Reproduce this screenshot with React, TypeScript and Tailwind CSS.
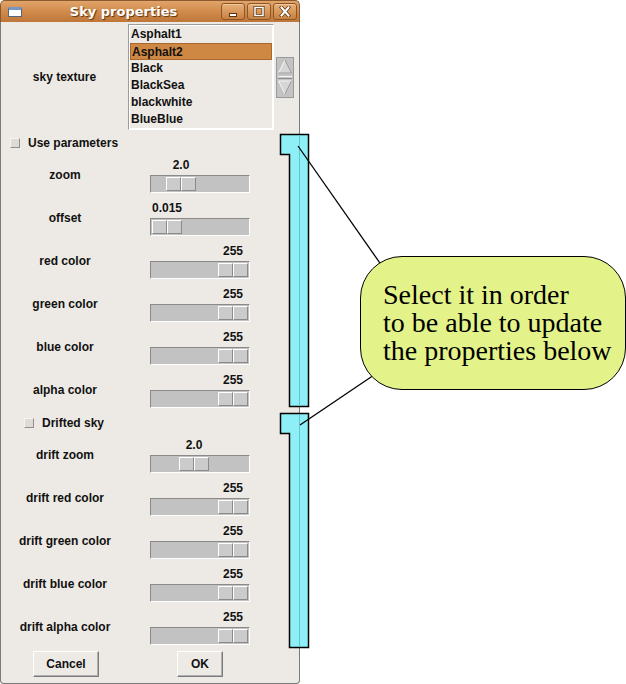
import React from 'react';

type Scale = { label: string; value: string; pos: string };

const mainScales: Scale[] = [
  { label: 'zoom', value: '2.0', pos: 'ml-[14px]' },
  { label: 'offset', value: '0.015', pos: 'ml-[0px]' },
  { label: 'red color', value: '255', pos: 'ml-[66px]' },
  { label: 'green color', value: '255', pos: 'ml-[66px]' },
  { label: 'blue color', value: '255', pos: 'ml-[66px]' },
  { label: 'alpha color', value: '255', pos: 'ml-[66px]' },
];

const driftScales: Scale[] = [
  { label: 'drift zoom', value: '2.0', pos: 'ml-[27px]' },
  { label: 'drift red color', value: '255', pos: 'ml-[66px]' },
  { label: 'drift green color', value: '255', pos: 'ml-[66px]' },
  { label: 'drift blue color', value: '255', pos: 'ml-[66px]' },
  { label: 'drift alpha color', value: '255', pos: 'ml-[66px]' },
];

const textures = ['Asphalt1', 'Asphalt2', 'Black', 'BlackSea', 'blackwhite', 'BlueBlue'];

const raised = 'border border-t-white border-l-white border-r-[#8a8a8a] border-b-[#8a8a8a]';

const ScaleRow: React.FC<Scale> = ({ label, value, pos }) => (
  <div className="flex h-[43px] items-center">
    <div className="w-[128px] pb-[1px] text-center">{label}</div>
    <div className="ml-[21px] flex w-[100px] flex-col self-stretch pt-[3px]">
      <div className="flex h-[16px] pl-[2px] leading-[16px]">
        <div className={`${pos} w-[30px] shrink-0 whitespace-nowrap text-center`}>{value}</div>
      </div>
      <div className="mt-[2px] flex h-[18px] w-[100px] border border-t-[#8a8a8a] border-l-[#8a8a8a] border-r-white border-b-white bg-[#c2c2c2] p-[1px]">
        <div className={`${pos} flex h-full w-[30px] shrink-0`}>
          <div className={`flex-1 ${raised} bg-[#cbcbcb]`} />
          <div className={`flex-1 ${raised} bg-[#cbcbcb]`} />
        </div>
      </div>
    </div>
  </div>
);

const CheckRow: React.FC<{ label: string; indent: string }> = ({ label, indent }) => (
  <div className="flex h-[22px] items-center">
    <div className={`${indent} h-[10px] w-[10px] border border-t-[#f4f4f4] border-l-[#f4f4f4] border-r-[#8f8f8f] border-b-[#8f8f8f] bg-[#dedbd6]`} />
    <div className="ml-[8px]">{label}</div>
  </div>
);

const TitleButton: React.FC<{ children: React.ReactNode }> = ({ children }) => (
  <div className="flex h-[17px] w-[24px] items-center justify-center rounded-[3px] border border-[#8c5526] bg-linear-to-b from-[#e8b07a] to-[#c8813f] shadow-[inset_0_1px_0_#f2c797]">
    {children}
  </div>
);

export default function App() {
  return (
    <div className="relative h-[684px] w-[626px] overflow-hidden bg-white font-['Liberation_Sans',Arial,sans-serif] text-[12px] font-bold text-[#111]">
      <div className="flex h-[684px] w-[300px] flex-col">
        {/* title bar */}
        <div className="flex h-[22px] shrink-0 items-center rounded-t-[5px] border border-b-0 border-[#8a5a2e] bg-linear-to-b from-[#e2a46a] via-[#d08b4b] to-[#bf7739] pl-[7px] pr-[2px]">
          <div className="h-[10px] w-[14px] border border-[#56657a] border-t-[3px] border-t-[#7897c2] bg-white" />
          <div className="flex-1 pl-[4px] text-center font-['DejaVu_Sans',sans-serif] text-[13px] font-bold text-white [text-shadow:1px_1px_1px_#5b3413]">
            Sky properties
          </div>
          <div className="flex gap-[2px]">
            <TitleButton>
              <svg width="12" height="10" viewBox="0 0 12 10">
                <rect x="2.5" y="6.5" width="7" height="3" fill="#fff" stroke="#5a3514" strokeWidth="1" />
              </svg>
            </TitleButton>
            <TitleButton>
              <svg width="12" height="11" viewBox="0 0 12 11">
                <rect x="2" y="1.5" width="8" height="8" fill="none" stroke="#5a3514" strokeWidth="3" />
                <rect x="2" y="1.5" width="8" height="8" fill="none" stroke="#fff" strokeWidth="1.5" />
              </svg>
            </TitleButton>
            <TitleButton>
              <svg width="12" height="11" viewBox="0 0 12 11">
                <path d="M2.5 1.5 L9.5 9.5 M9.5 1.5 L2.5 9.5" stroke="#5a3514" strokeWidth="3.5" strokeLinecap="square" />
                <path d="M2.5 1.5 L9.5 9.5 M9.5 1.5 L2.5 9.5" stroke="#fff" strokeWidth="2" strokeLinecap="square" />
              </svg>
            </TitleButton>
          </div>
        </div>

        {/* body */}
        <div className="flex flex-1 flex-col rounded-b-[4px] border border-t-0 border-[#7a7a7a] bg-[#edeae5]">
          <div className="flex h-[110px] items-center">
            <div className="w-[127px] text-center">sky texture</div>
            <div className="h-[106px] w-[146px] border border-t-[#9c9c9c] border-l-[#9c9c9c] border-r-white border-b-white">
              <div className="h-full border border-white">
                {textures.map((t, i) => (
                  <div
                    key={t}
                    className={`h-[17px] pl-[1px] leading-[17px] ${i === 1 ? 'border border-[#a9692e] bg-[#cf8843] leading-[15px]' : ''}`}
                  >
                    {t}
                  </div>
                ))}
              </div>
            </div>
            <svg className="ml-[2px]" width="18" height="41" viewBox="0 0 18 41">
              <rect x="0.5" y="0.5" width="17" height="40" fill="#c3c3c3" stroke="#9a9a9a" />
              <path d="M9 3 L2.5 16 L15.5 16 Z" fill="#d6d6d6" stroke="#f6f6f6" />
              <path d="M9 3 L15.5 16 L2.5 16" fill="none" stroke="#8e8e8e" />
              <line x1="2" y1="19.5" x2="16" y2="19.5" stroke="#f6f6f6" />
              <line x1="2" y1="21.5" x2="16" y2="21.5" stroke="#8e8e8e" />
              <path d="M2.5 24 L15.5 24 L9 37 Z" fill="#d6d6d6" stroke="#f6f6f6" />
              <path d="M15.5 24 L9 37" fill="none" stroke="#8e8e8e" />
            </svg>
          </div>

          <CheckRow label="Use parameters" indent="ml-[9px]" />
          {mainScales.map((s) => (
            <ScaleRow key={s.label} {...s} />
          ))}

          <CheckRow label="Drifted sky" indent="ml-[23px]" />
          {driftScales.map((s) => (
            <ScaleRow key={s.label} {...s} />
          ))}

          <div className="flex h-[33px] items-start pt-[2px]">
            <div className="ml-[32px] flex h-[26px] w-[66px] items-center justify-center border border-t-white border-l-white border-r-[#7b7b7b] border-b-[#7b7b7b] shadow-[inset_-1px_-1px_0_#b0b0b0]">
              Cancel
            </div>
            <div className="ml-[78px] flex h-[26px] w-[46px] items-center justify-center border border-t-white border-l-white border-r-[#7b7b7b] border-b-[#7b7b7b] shadow-[inset_-1px_-1px_0_#b0b0b0]">
              OK
            </div>
          </div>
        </div>
      </div>

      {/* annotation brackets and leader lines */}
      <svg className="pointer-events-none absolute left-0 top-0" width="626" height="684" viewBox="0 0 626 684">
        <polygon
          points="280.5,134.5 308.5,134.5 308.5,406.5 289.5,406.5 289.5,154.5 280.5,154.5"
          fill="#8eeff7"
          stroke="#000"
          strokeWidth="1.5"
        />
        <line x1="299.5" y1="135.5" x2="299.5" y2="405.5" stroke="#62c5cf" strokeWidth="1" />
        <polygon
          points="280.5,413.5 308.5,413.5 308.5,647.5 289.5,647.5 289.5,433.5 280.5,433.5"
          fill="#8eeff7"
          stroke="#000"
          strokeWidth="1.5"
        />
        <line x1="299.5" y1="414.5" x2="299.5" y2="646.5" stroke="#62c5cf" strokeWidth="1" />
        <line x1="298" y1="146" x2="382" y2="266" stroke="#000" strokeWidth="1.3" />
        <line x1="300" y1="425" x2="374" y2="375" stroke="#000" strokeWidth="1.3" />
      </svg>

      <div className="absolute left-[360px] top-[256px] flex h-[134px] w-[266px] items-center rounded-[42px] border-[1.5px] border-black bg-[#e3f389] pl-[22px] font-['Liberation_Serif','Times_New_Roman',serif] text-[28px] font-normal leading-[28px] text-black">
        <div>
          Select it in order
          <br />
          to be able to update
          <br />
          the properties below
        </div>
      </div>
    </div>
  );
}
